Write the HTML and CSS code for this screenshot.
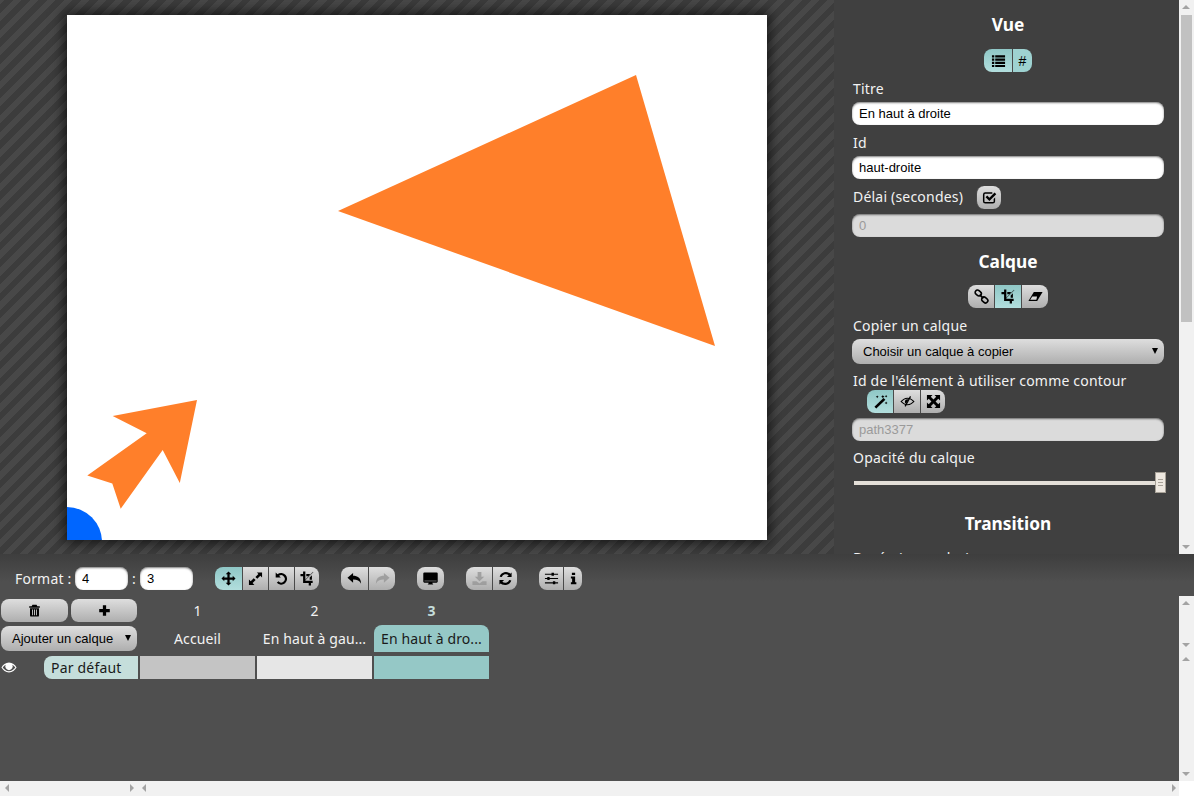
FILE: index.html
```html
<!DOCTYPE html>
<html lang="fr">
<head>
<meta charset="utf-8">
<title>Éditeur</title>
<link rel="stylesheet" href="styles.css">
</head>
<body>
<svg class="defs" width="0" height="0">
  <defs>
    <symbol id="i-list" viewBox="0 0 16 16"><path d="M1 2.500h2.500v2.400H1zM4.500 2.500H15v2.400H4.500zM1 5.900h2.500v2.400H1zM4.500 5.900H15v2.400H4.500zM1 9.300h2.500v2.400H1zM4.500 9.300H15v2.400H4.500zM1 12.700h2.500v2.300H1zM4.500 12.700H15v2.300H4.500z"/></symbol>
    <symbol id="i-check" viewBox="0 0 16 16"><path d="M3.500 2.500H11v1.600H3.500a.9.900 0 0 0-.9.900v7a.9.900 0 0 0 .9.900h8a.9.900 0 0 0 .9-.9V9.500L14 8v4a2.500 2.500 0 0 1-2.500 2.500h-8A2.500 2.500 0 0 1 1 12V5a2.500 2.500 0 0 1 2.500-2.500z"/><path d="M3.800 7.700l1.800-1.800 2.300 2.300 5.500-5.500 1.800 1.800-7.300 7.300z"/></symbol>
    <symbol id="i-link" viewBox="0 0 16 16"><g fill="none" stroke="#000" stroke-width="1.700"><rect x="1" y="1.800" width="7" height="5" rx="2.500" transform="rotate(40 4.500 4.300)"/><rect x="8" y="9.200" width="7" height="5" rx="2.500" transform="rotate(40 11.500 11.700)"/><path d="M6 6l4 4"/></g></symbol>
    <symbol id="i-crop" viewBox="0 0 16 16"><path d="M3.300 .500h2.400v9.800h7.800v2.400h-1.800v2.800H9.300v-2.800h-6V5.700H.500V3.300h2.800zM6.700 3.300h4.200L9 5.700H6.700zM10.300 6.800l2.400-2.400v4.900h-2.400z"/><path d="M13.700.800l.6.600-8.800 8.800-.6-.6z" opacity=".6"/></symbol>
    <symbol id="i-eraser" viewBox="0 0 18 16"><path d="M7 2.500h10.500L11 13.500H.500z"/><path d="M5.200 8h5.700l-.9 4H2.600z" fill="#d8d8d8"/></symbol>
    <symbol id="i-wand" viewBox="0 0 16 16"><path d="M11.200 4.200l2 2L3.500 15.500l-2-2z"/><path d="M10.500 1l.6 1.200 1.200.6-1.200.6-.6 1.200-.6-1.200-1.200-.6 1.200-.6zM4.500 1.500l.5 1 1 .5-1 .5-.5 1-.5-1-1-.5 1-.5zM14 8l.5 1 1 .5-1 .5-.5 1-.5-1-1-.5 1-.5zM14 1l.5.800.8.500-.8.500-.5.800-.5-.8-.8-.5.8-.5z"/></symbol>
    <symbol id="i-eye-off" viewBox="0 0 18 16"><path fill-rule="evenodd" d="M9 3.500c3.600 0 6.500 2.300 8.500 4.500-2 2.200-4.900 4.500-8.500 4.500S2.500 10.200.500 8C2.500 5.800 5.400 3.500 9 3.500zm0 1.200C6.500 4.700 4 6.300 2.300 8 4 9.700 6.500 11.300 9 11.300s5-1.600 6.700-3.300C14 6.300 11.500 4.700 9 4.700z"/><path d="M8.500 5.200a2.900 2.900 0 0 1 1.700.3l-2.900 5.300A3 3 0 0 1 8.500 5.200z"/><path d="M12 1.500l1.300.8-6.500 12-1.300-.8z"/></symbol>
    <symbol id="i-expand" viewBox="0 0 16 16"><path d="M1 1h6L5.100 2.900 8 5.800l2.900-2.900L9 1h6v6l-1.900-1.900L10.200 8l2.900 2.900L15 9v6H9l1.900-1.900L8 10.200l-2.900 2.900L7 15H1V9l1.900 1.900L5.800 8 2.900 5.100 1 7z"/></symbol>
    <symbol id="i-move" viewBox="0 0 16 16"><path d="M8 .500l3 3H9.200v3.300h3.300V5l3 3-3 3V9.200H9.200v3.300H11l-3 3-3-3h1.800V9.200H3.500V11l-3-3 3-3v1.800h3.300V3.500H5z"/></symbol>
    <symbol id="i-resize" viewBox="0 0 16 16"><path d="M9.500 1.500H15v5.500l-1.900-1.900-3.200 3.200-2-2 3.200-3.200zM1 9l1.900 1.900 3.200-3.200 2 2-3.200 3.200L6.800 14.800H1z"/></symbol>
    <symbol id="i-rotate" viewBox="0 0 16 16"><path d="M1.800 1.500l1.900 1.900a6.300 6.300 0 1 1-.7 9.200l1.700-1.600a3.900 3.900 0 1 0 .7-5.900L7.300 7H1.800z"/></symbol>
    <symbol id="i-undo" viewBox="0 0 16 16"><path d="M6.500 2v3C11 5 15 7 15 13.500c-1.500-3-4-4.500-8.500-4.500v3.500L.500 7.200z"/></symbol>
    <symbol id="i-redo" viewBox="0 0 16 16"><path d="M9.500 2v3C5 5 1 7 1 13.500 2.500 10.500 5 9 9.500 9v3.500l6-5.300z"/></symbol>
    <symbol id="i-desktop" viewBox="0 0 16 16"><path d="M1.500 1.500h13a1.200 1.200 0 0 1 1.200 1.200v8.600a1.200 1.200 0 0 1-1.200 1.200H10c0 1 .5 1.300 1 1.800H5c.5-.5 1-.8 1-1.800H1.500A1.200 1.200 0 0 1 .300 11.300V2.700A1.200 1.200 0 0 1 1.500 1.500z"/><path d="M1.500 10h13v1.200h-13z" fill="#555"/></symbol>
    <symbol id="i-download" viewBox="0 0 16 16"><path d="M6 1h4v5h3l-5 5-5-5h3z"/><path d="M.500 11h4.200L8 13.300 11.300 11h4.200v4H.500z"/></symbol>
    <symbol id="i-refresh" viewBox="0 0 16 16"><path d="M14.500 1.500v5h-5l1.900-1.900A4.600 4.600 0 0 0 4 6.500L1.800 6a7 7 0 0 1 11.300-3.200zM1.500 14.500v-5h5l-1.900 1.900a4.600 4.600 0 0 0 7.400-1.900l2.200.5a7 7 0 0 1-11.300 3.200z"/></symbol>
    <symbol id="i-sliders" viewBox="0 0 16 16"><path d="M1 2.800h7V1.800h2.600v1H15v1.200h-4.400v1H8v-1H1zM1 7.400h2.500v-1H6v1h9v1.200H6v1H3.500v-1H1zM1 12h8.500v-1H12v1h3v1.200h-3v1H9.500v-1H1z"/></symbol>
    <symbol id="i-info" viewBox="0 0 16 16"><path d="M6 .800h4v3H6zM4.800 5.500H10v7.200h1.500v2.500h-6.700v-2.500h1.500V8H4.800z"/></symbol>
    <symbol id="i-trash" viewBox="0 0 16 16"><path fill-rule="evenodd" d="M5.500 1h5l1 1.800h3v1.700h-13V2.800h3zM2.500 5.200h11V14a1.500 1.500 0 0 1-1.500 1.500H4A1.500 1.500 0 0 1 2.500 14zM5 6.800v7h1.200v-7zM7.400 6.800v7h1.200v-7zM9.800 6.800v7H11v-7z"/></symbol>
    <symbol id="i-plus" viewBox="0 0 16 16"><path d="M6 1.500h4v4.500h4.500v4H10v4.500H6V10H1.500V6H6z"/></symbol>
    <symbol id="i-eye" viewBox="0 0 18 14"><path fill-rule="evenodd" d="M9 1.500c3.800 0 6.800 2.700 8.500 5.500C15.800 9.800 12.800 12.500 9 12.500S2.200 9.800.500 7C2.200 4.200 5.200 1.500 9 1.500zM5.300 3.800C3.900 4.600 2.700 5.700 1.900 7c1.400 2.100 4 4.200 7.100 4.200s5.700-2.100 7.100-4.200c-.8-1.300-2-2.400-3.400-3.200a4.200 4.200 0 1 1-7.400 0z"/></symbol>
  </defs>
</svg>
<div class="app">
  <div class="top">
    <main class="stage">
      <svg class="canvas" viewBox="0 0 700 525" width="700" height="525">
        <circle class="shape-blue" cx="0" cy="527" r="35"/>
        <polygon class="shape-orange" points="569,60 271,196 648,331"/>
        <polygon class="shape-orange" points="130,385 45.700,401 79.700,418.300 20.300,460.500 45.300,468.500 53.700,493.700 95.700,435 112.800,468"/>
      </svg>
    </main>
    <aside class="panel">
      <h2 class="head head-vue">Vue</h2>
      <div class="center">
        <div class="group">
          <button class="btn on w28"><svg class="ic"><use href="#i-list"/></svg></button>
          <button class="btn on w20 hash">#</button>
        </div>
      </div>
      <label class="lab lab-titre">Titre</label>
      <input class="field" value="En haut à droite">
      <label class="lab lab-id">Id</label>
      <input class="field" value="haut-droite">
      <div class="delay">
        <label class="lab-inline">Délai (secondes)</label>
        <button class="btn single w25"><svg class="ic"><use href="#i-check"/></svg></button>
      </div>
      <input class="field off" placeholder="0" disabled>
      <h2 class="head head-calque">Calque</h2>
      <div class="center">
        <div class="group">
          <button class="btn w26"><svg class="ic"><use href="#i-link"/></svg></button>
          <button class="btn on w27"><svg class="ic"><use href="#i-crop"/></svg></button>
          <button class="btn w27"><svg class="ic"><use href="#i-eraser"/></svg></button>
        </div>
      </div>
      <label class="lab lab-copier">Copier un calque</label>
      <div class="select wide"><span>Choisir un calque à copier</span><i class="caret"></i></div>
      <label class="lab lab-contour">Id de l'élément à utiliser comme contour</label>
      <div class="group indent">
        <button class="btn on w26"><svg class="ic"><use href="#i-wand"/></svg></button>
        <button class="btn w27"><svg class="ic"><use href="#i-eye-off"/></svg></button>
        <button class="btn w25"><svg class="ic"><use href="#i-expand"/></svg></button>
      </div>
      <input class="field off field-path" placeholder="path3377" disabled>
      <label class="lab lab-opacity">Opacité du calque</label>
      <div class="slider"><div class="thumb"></div></div>
      <h2 class="head head-trans">Transition</h2>
      <label class="lab lab-duree">Durée (secondes)</label>
    </aside>
    <div class="vbar tall">
      <i class="arrow up"></i>
      <div class="vtrack"><div class="vthumb"></div></div>
      <i class="arrow down"></i>
    </div>
  </div>
  <div class="bottom">
    <div class="toolbar">
      <span class="fmt">Format :</span>
      <input class="field small" value="4">
      <span class="colon">:</span>
      <input class="field small" value="3">
      <div class="group g1">
        <button class="btn on w27"><svg class="ic"><use href="#i-move"/></svg></button>
        <button class="btn w26"><svg class="ic"><use href="#i-resize"/></svg></button>
        <button class="btn w26"><svg class="ic"><use href="#i-rotate"/></svg></button>
        <button class="btn w25"><svg class="ic"><use href="#i-crop"/></svg></button>
      </div>
      <div class="group g2">
        <button class="btn w27"><svg class="ic"><use href="#i-undo"/></svg></button>
        <button class="btn w27 dim"><svg class="ic"><use href="#i-redo"/></svg></button>
      </div>
      <div class="group g2">
        <button class="btn single w27"><svg class="ic"><use href="#i-desktop"/></svg></button>
      </div>
      <div class="group g2">
        <button class="btn w26 dim"><svg class="ic"><use href="#i-download"/></svg></button>
        <button class="btn w25"><svg class="ic"><use href="#i-refresh"/></svg></button>
      </div>
      <div class="group g2">
        <button class="btn w24"><svg class="ic"><use href="#i-sliders"/></svg></button>
        <button class="btn w19"><svg class="ic sm"><use href="#i-info"/></svg></button>
      </div>
    </div>
    <div class="timeline">
      <div class="tl-main">
        <div class="tl-left">
          <div class="tl-actions">
            <button class="btn single tl-btn"><svg class="ic sm"><use href="#i-trash"/></svg></button>
            <button class="btn single tl-btn"><svg class="ic sm"><use href="#i-plus"/></svg></button>
          </div>
          <div class="select add"><span>Ajouter un calque</span><i class="caret"></i></div>
          <div class="layer-row">
            <svg class="eye"><use href="#i-eye"/></svg>
            <span class="layer-name">Par défaut</span>
          </div>
        </div>
        <div class="tl-grid">
          <div class="num">1</div><div class="num">2</div><div class="num cur">3</div>
          <div class="tab">Accueil</div><div class="tab">En haut à gau...</div><div class="tab active">En haut à dro...</div>
          <div class="cell c1"></div><div class="cell c2"></div><div class="cell c3"></div>
        </div>
      </div>
      <div class="vbars">
        <div class="vbar short"><i class="arrow up"></i><i class="arrow down"></i></div>
        <div class="vbar long"><i class="arrow up"></i><i class="arrow down"></i></div>
      </div>
    </div>
    <div class="hbars">
      <div class="hbar h1"><i class="arrow left"></i><i class="arrow right"></i></div>
      <div class="hbar h2"><i class="arrow left"></i><i class="arrow right"></i></div>
      <div class="corner"></div>
    </div>
  </div>
</div>
</body>
</html>
```

FILE: styles.css
```css
* { box-sizing: border-box; }
html, body { margin: 0; padding: 0; height: 100%; overflow: hidden; background: #4d4d4d; }
body { font-family: "Noto Sans", sans-serif; font-size: 14px; color: #fff; letter-spacing: .2px; }
.defs { position: absolute; }
.app { display: flex; flex-direction: column; width: 1194px; height: 796px; overflow: hidden; }

.top { display: flex; height: 554px; flex: none; }
.stage {
  width: 834px; flex: none; padding: 15px 0 0 67px; overflow: hidden;
  background: repeating-linear-gradient(-45deg, #3c3c3c 0, #3c3c3c 6px, #484848 6px, #484848 12px);
}
.canvas { display: block; background: #fff; box-shadow: 0 0 12px 3px rgba(0,0,0,.65); }
.shape-orange { fill: #ff7f2a; }
.shape-blue { fill: #0066ff; }

.panel { width: 345px; flex: none; padding: 0 15px 0 18px; background: #404040; overflow: hidden; }
.head { margin: 0; font-size: 17.3px; line-height: 24px; font-weight: 700; letter-spacing: 0; text-align: center; color: #fff; }
.head-vue { padding-top: 13px; margin-bottom: 12px; }
.head-calque { margin-top: 13px; margin-bottom: 11px; }
.head-trans { margin-top: 27px; margin-bottom: 12px; }
.center { display: flex; justify-content: center; }
.lab { display: block; line-height: 20px; color: #f2f2f2; padding-left: 1px; }
.lab-titre { margin-top: 7px; margin-bottom: 3px; }
.lab-id { margin-top: 8px; margin-bottom: 3px; }
.lab-copier { margin-top: 8px; margin-bottom: 3px; }
.lab-contour { margin-top: 7px; line-height: 19px; }
.lab-opacity { margin-top: 7px; }
.lab-duree { margin-top: 0; }
.delay { display: flex; align-items: flex-start; gap: 13px; margin-top: 7px; margin-bottom: 5px; padding-left: 1px; color: #f2f2f2; }
.lab-inline { line-height: 22px; }

.field {
  display: block; width: 312px; height: 23px; padding: 0 7px; border: 0; border-radius: 8px; outline: 0;
  background: #fff; box-shadow: inset 0 1px 2px rgba(0,0,0,.5);
  font-family: "Liberation Sans", sans-serif; font-size: 13px; letter-spacing: 0; color: #000;
}
.field.off { background: #dbdbdb; }
.field.off::placeholder { color: #9a9a9a; opacity: 1; }
.field-path { margin-top: 5px; }
.field.small { width: 53px; }

.group { display: flex; height: 23px; }
.indent { margin-left: 15px; }
.btn {
  display: flex; align-items: center; justify-content: center; height: 23px; padding: 0; border: 0;
  border-left: 1px solid #4a4a4a; color: #000;
  background: linear-gradient(#dedede, #aeaeae);
  font-family: "Liberation Sans", sans-serif; font-size: 14px; letter-spacing: 0;
}
.btn:first-child { border-left: 0; border-radius: 8px 0 0 8px; }
.btn:last-child { border-radius: 0 8px 8px 0; }
.btn.single { border-radius: 8px; }
.btn.on { background: linear-gradient(#8fc7c6, #b2dedd); }
.group .btn.on.hash { background: #9ed2d1; }
.btn.dim { color: #999; }
.btn.dim .ic { fill: #999; opacity: .85; }
.w19 { width: 19px; } .w20 { width: 20px; } .w24 { width: 24px; } .w25 { width: 25px; } .w26 { width: 26px; } .w27 { width: 27px; } .w28 { width: 28px; }
.ic { width: 15px; height: 15px; fill: #000; }
.ic.sm { width: 13px; height: 13px; }

.select {
  position: relative; display: flex; align-items: center; border-radius: 8px;
  background: linear-gradient(#dedede, #aeaeae); color: #000;
  font-family: "Liberation Sans", sans-serif; font-size: 13px; letter-spacing: 0;
}
.select.wide { width: 312px; height: 25px; padding-left: 11px; }
.caret { position: absolute; right: 6px; top: 9px; border: 3px solid transparent; border-top: 6px solid #000; border-bottom: 0; }

.slider { position: relative; height: 4px; width: 302px; margin: 13px 0 0 2px; background: #e4dfd8; }
.thumb {
  position: absolute; left: 301px; top: -9px; width: 11px; height: 21px;
  border: 1px solid #a8a298;
  background: repeating-linear-gradient(#a8a298 0, #a8a298 1px, #eee8e0 1px, #eee8e0 3px) center / 5px 7px no-repeat, #eee8e0;
}

.vbar { position: relative; width: 15px; flex: none; background: #f1f1f1; }
.vbar.tall { height: 554px; }
.vtrack { position: absolute; top: 15px; left: 0; right: 0; }
.vthumb { width: 11px; height: 307px; margin-left: 2px; background: #c1c1c1; }
.arrow { position: absolute; width: 0; height: 0; border: 4px solid transparent; }
.arrow.up { top: 5px; left: 3px; border-bottom: 4px solid #a3a3a3; border-top: 0; }
.arrow.down { bottom: 5px; left: 3px; border-top: 4px solid #a3a3a3; border-bottom: 0; }
.arrow.left { left: 5px; top: 3px; border-right: 4px solid #a3a3a3; border-left: 0; }
.arrow.right { right: 3px; top: 3px; border-left: 4px solid #a3a3a3; border-right: 0; }

.bottom { flex: 1; display: flex; flex-direction: column; background: linear-gradient(#3e3e3e 0, #4f4f4f 28px, #4f4f4f 100%); }
.toolbar { display: flex; align-items: center; height: 42px; padding: 13px 0 6px 15px; flex: none; }
.fmt { line-height: 23px; width: 60px; flex: none; color: #f2f2f2; }
.colon { width: 12px; text-align: center; color: #f2f2f2; }
.g1 { margin-left: 22px; }
.g2 { margin-left: 22px; }

.timeline { display: flex; flex: 1; min-height: 0; }
.tl-main { flex: 1; display: flex; min-width: 0; }
.tl-left { width: 140px; flex: none; padding-top: 3px; padding-left: 1px; }
.tl-actions { display: flex; gap: 2px; }
.tl-btn { width: 67px; }
.select.add { width: 136px; height: 25px; margin-top: 4px; padding-left: 11px; }
.layer-row { display: flex; align-items: center; margin-top: 5px; height: 23px; }
.eye { width: 16px; height: 13px; fill: #fff; margin-right: 27px; flex: none; }
.layer-name { width: 94px; height: 23px; line-height: 23px; padding-left: 7px; border-radius: 8px 0 0 8px; background: #c5dedb; color: #1a1a1a; }

.tl-grid { display: grid; grid-template-columns: repeat(3, 115px); grid-template-rows: 25px 27px 23px; column-gap: 2px; row-gap: 4px; align-content: start; width: 349px; }
.num { line-height: 20px; padding-top: 5px; text-align: center; color: #f2f2f2; }
.num.cur { font-weight: 700; color: #c5dedb; }
.tab { line-height: 27px; text-align: center; color: #f2f2f2; white-space: nowrap; overflow: hidden; letter-spacing: .1px; }
.tab.active { background: #95c8c6; border-radius: 8px 8px 0 0; color: #1a1a1a; }
.c1 { background: #c4c4c4; } .c2 { background: #e6e6e6; } .c3 { background: #95c8c6; }

.vbars { width: 15px; flex: none; display: flex; flex-direction: column; }
.vbar.short { height: 56px; }
.vbar.long { flex: 1; }

.hbars { display: flex; height: 15px; flex: none; }
.hbar { position: relative; background: #f1f1f1; height: 15px; }
.h1 { width: 137px; }
.h2 { width: 1042px; }
.corner { width: 15px; background: #fff; }
```
